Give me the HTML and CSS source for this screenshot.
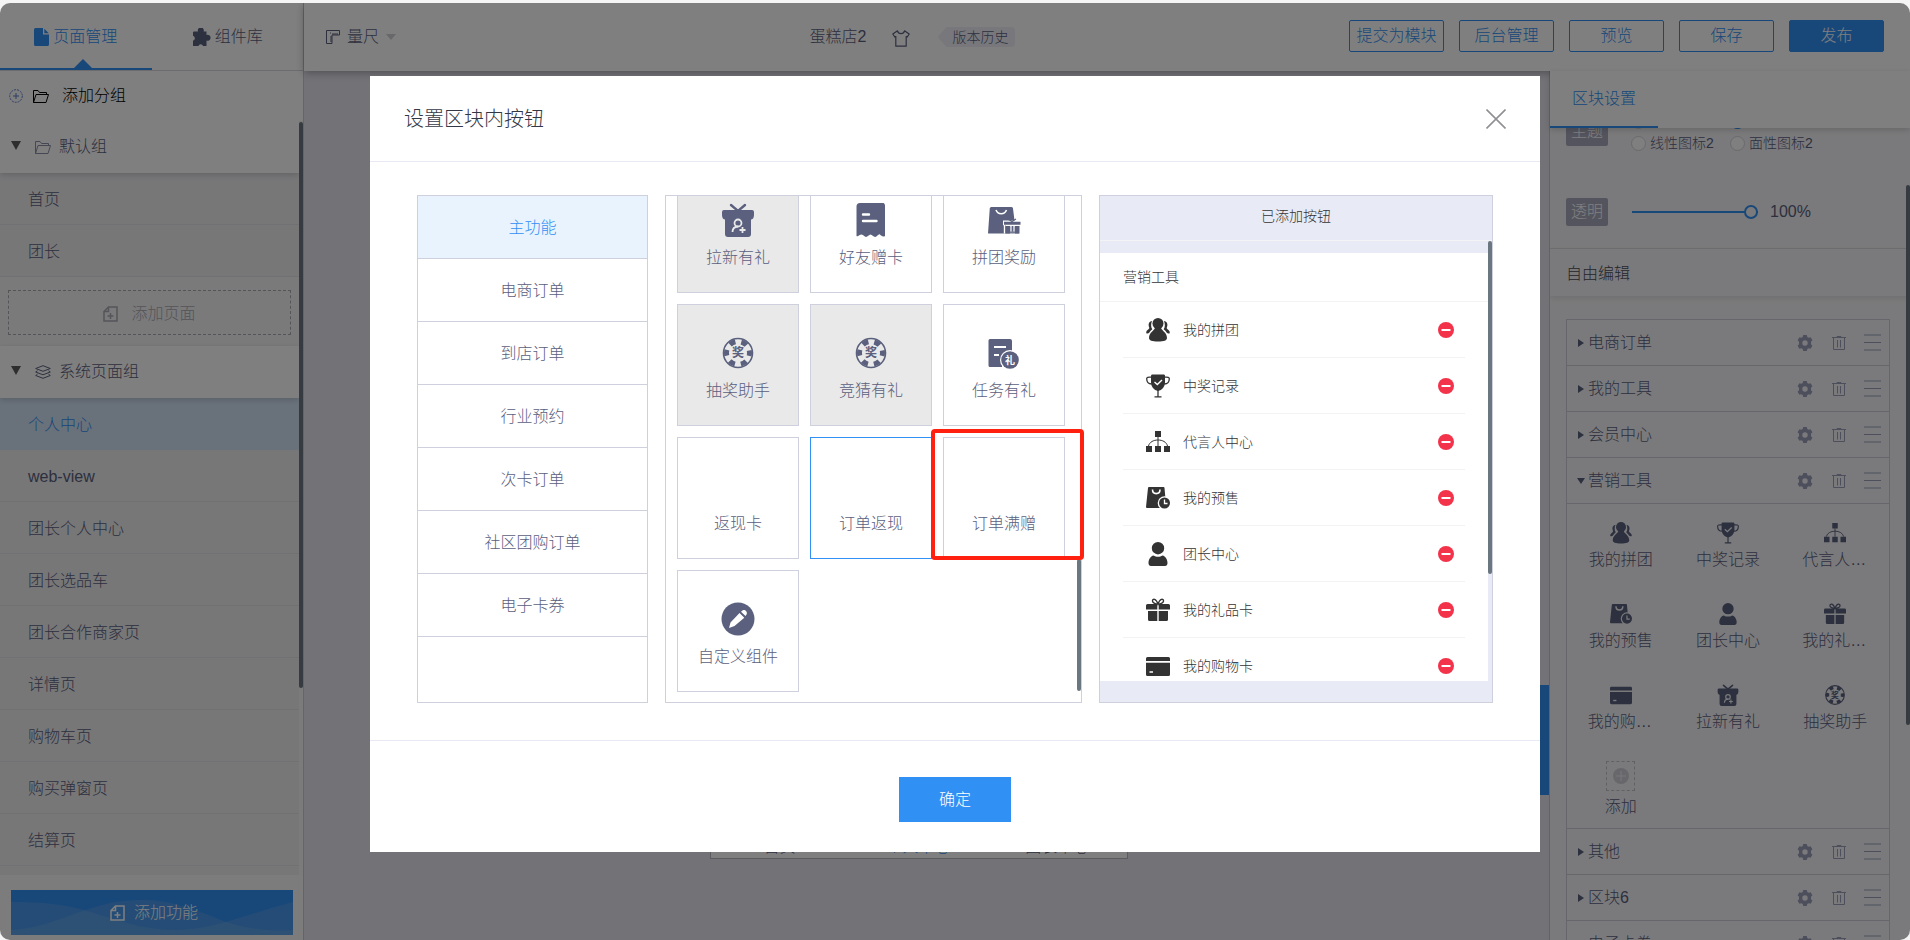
FILE: index.html
```html
<!DOCTYPE html>
<html lang="zh-CN">
<head>
<meta charset="utf-8">
<title>设置区块内按钮</title>
<link rel="stylesheet" href="styles.css">
</head>
<body>
<svg class="sprite" aria-hidden="true">
  <symbol id="i-doc" viewBox="0 0 15 18"><path fill="currentColor" d="M1.5 0H9v6.5h6V16.500a1.500 1.500 0 0 1-1.500 1.500h-12A1.500 1.500 0 0 1 0 16.500v-15A1.500 1.500 0 0 1 1.500 0zM10.300 0.800L14.800 5.300H10.300z"/></symbol>
  <symbol id="i-puzzle" viewBox="0 0 19 18"><path fill="currentColor" d="M6 3.500a3 3 0 1 1 5.600 0H14.500V7a3 3 0 1 1 0 5.600V18H11a2.400 2.400 0 0 0-4.600 0H1V12.800a2.600 2.600 0 0 0 0-5V4.500a1 1 0 0 1 1-1z"/></symbol>
  <symbol id="i-folder" viewBox="0 0 16 14"><path fill="none" stroke="currentColor" stroke-linejoin="round" d="M.5 13.500V1.500h4.500l1.500 2h7v2M.5 13.500l2.500-8h12.500l-2.500 8z"/></symbol>
  <symbol id="i-plus-dash" viewBox="0 0 14 14"><circle cx="7" cy="7" r="6.300" fill="none" stroke="currentColor" stroke-dasharray="2 1"/><path stroke="currentColor" d="M7 4v6M4 7h6"/></symbol>
  <symbol id="i-layers" viewBox="0 0 16 14"><g fill="none" stroke="currentColor" stroke-linejoin="round"><path d="M8 .7L15.300 3.500 8 6.300.7 3.500z"/><path d="M2.500 5.700L.7 7 8 9.800 15.300 7 13.500 5.700M2.500 9.200L.7 10.500 8 13.300l7.300-2.800-1.800-1.300"/></g></symbol>
  <symbol id="i-addpage" viewBox="0 0 15 16"><path fill="none" stroke="currentColor" stroke-width="1.500" d="M1 5.500L5.500 1H14v14H1zM5.500 1v4.500H1M7.500 7v6M4.500 10h6"/></symbol>
  <symbol id="i-ruler" viewBox="0 0 14 14"><path fill="none" stroke="currentColor" d="M.5.5h13V5H6v8.500H.5zM4 3h1M7 3v2M9 3v2M11 3v2M4 7h2M4 9h2M4 11h2"/></symbol>
  <symbol id="i-shirt" viewBox="0 0 18 17"><path fill="none" stroke="currentColor" stroke-width="1.200" stroke-linejoin="round" d="M5.500.8L.8 4l2 3 1-.6v9.800h10.400V6.400l1 .6 2-3L12.500.8a3.600 3.600 0 0 1-7 0z"/></symbol>
  <symbol id="i-close" viewBox="0 0 20 20"><path stroke="currentColor" stroke-width="1.600" d="M.5.5l19 19M19.500.5l-19 19"/></symbol>
  <symbol id="i-gear" viewBox="0 0 16 16"><path fill="currentColor" fill-rule="evenodd" d="M6.200 0h3.600l.5 2 1.300.8 2-.6 1.800 3.100L14 6.700v2.600l1.400 1.400-1.800 3.100-2-.6-1.300.8-.5 2H6.200l-.5-2-1.300-.8-2 .6L.6 10.700 2 9.300V6.700L.6 5.300l1.800-3.100 2 .6L5.700 2zM8 5.300a2.700 2.700 0 1 0 0 5.400 2.700 2.700 0 0 0 0-5.400z"/></symbol>
  <symbol id="i-trash" viewBox="0 0 14 14"><path fill="none" stroke="currentColor" d="M0 1.500h14M5 1V.5h4V1M1.500 1.500v12h11v-12M5.500 4v7.500M8.500 4v7.500"/></symbol>
  <symbol id="i-bars" viewBox="0 0 17 17"><path stroke="currentColor" stroke-width="1.200" d="M0 1h17M0 8.500h17M0 16h17"/></symbol>
  <symbol id="i-users" viewBox="0 0 24 24"><g fill="currentColor"><circle cx="12" cy="5.500" r="5.500"/><path d="M9 9.500h6c0 3 6 4.500 6 10.500 0 2.500-3 3.500-9 3.500S3 22.500 3 20C3 14 9 12.500 9 9.500z"/><path d="M6 3c-3 .5-4 3-3 6 .5 1 .5 1.500-.8 2.600C.8 12.500 0 13.800.3 15.200c1 .5 2 .3 2.700-.2.800-1.500 2-2.600 3.300-3.800C4.800 9 4.800 6 6 3zM18 3c3 .5 4 3 3 6-.5 1-.5 1.500.8 2.600 1.400.9 2.200 2.200 1.900 3.600-1 .5-2 .3-2.700-.2-.8-1.500-2-2.600-3.300-3.800C19.200 9 19.200 6 18 3z"/></g></symbol>
  <symbol id="i-trophy" viewBox="0 0 24 24"><path fill="currentColor" d="M5 2c0-1 .5-1.500 1.500-1.500h11c1 0 1.500.5 1.500 1.500v6c0 5-3 8-7 9-4-1-7-4-7-9z"/><path fill="none" stroke="currentColor" stroke-width="1.300" d="M5.500 3.200C2 2.700.7 3.500.7 4.500c0 3.500 1.300 5.500 5 5.500M18.500 3.200c3.500-.5 4.800.3 4.800 1.300 0 3.500-1.300 5.500-5 5.500M12 16v6.500M8.500 22.800h7"/><path fill="none" class="cut-line" stroke-width="1.400" d="M8.500 8l2.800 2.500L16 6"/></symbol>
  <symbol id="i-org" viewBox="0 0 24 24"><path fill="currentColor" d="M9 1h6v6H9zM0 16h6v6H0zM9 16h6v6H9zM18 16h6v6h-6z"/><path fill="none" stroke="currentColor" stroke-width="1" d="M12 7v9M2.500 16c1-4 5-6 9.500-6s8.500 2 9.500 6"/></symbol>
  <symbol id="i-bagclock" viewBox="0 0 24 24"><path fill="currentColor" d="M3 1h14.500a1 1 0 0 1 1 1l.8 9-4.300 2-2 5 1 4H1a1 1 0 0 1-1-1L2 2a1 1 0 0 1 1-1z"/><path fill="none" class="cut-line" stroke-width="1.600" d="M6.500 3.500c0 5.500 7.500 5.500 7.500 0"/><circle cx="18.500" cy="17" r="6.800" class="cut-fill"/><circle cx="18.500" cy="17" r="5.500" fill="currentColor"/><path fill="none" class="cut-line" stroke-width="1.300" d="M18.500 13.500V17.500h3"/></symbol>
  <symbol id="i-person" viewBox="0 0 24 24"><path fill="currentColor" d="M12 0a6.200 6.200 0 1 1 0 12.400A6.200 6.200 0 0 1 12 0zM7.500 13.500c2.500 1.800 6.500 1.800 9 0 3 .5 5 4 5 7.500 0 2-1 3-2.500 3H5c-1.500 0-2.500-1-2.500-3 0-3.500 2-7 5-7.500z"/></symbol>
  <symbol id="i-gift" viewBox="0 0 24 24"><path fill="currentColor" d="M1.500 6h9.800v5.500H0v-4A1.500 1.500 0 0 1 1.500 6zM12.700 6h9.800A1.500 1.500 0 0 1 24 7.500v4H12.700zM2 13h9.300v10H3.500A1.500 1.500 0 0 1 2 21.500zM12.700 13H22v8.500a1.500 1.500 0 0 1-1.500 1.500h-7.800z"/><path fill="none" stroke="currentColor" stroke-width="1.400" d="M12 6C10 0 6.500.5 6.500 3c0 1.500 2.500 3 5.500 3 3 0 5.500-1.500 5.500-3C17.500.5 14 0 12 6z"/></symbol>
  <symbol id="i-card" viewBox="0 0 24 24"><path fill="currentColor" d="M1.500 3h21A1.500 1.500 0 0 1 24 4.500V7H0V4.500A1.500 1.500 0 0 1 1.500 3zM0 8.800h24v11.700a1.500 1.500 0 0 1-1.500 1.500h-21A1.500 1.500 0 0 1 0 20.500z"/><path class="cut-line" stroke-width="1.500" d="M3.500 18h3.500"/></symbol>
  <symbol id="i-giftuser" viewBox="0 0 34 34"><path fill="currentColor" d="M3 7h28a2 2 0 0 1 2 2v3c0 3-1.500 4.500-3 4.500V31a3 3 0 0 1-3 3H7a3 3 0 0 1-3-3V16.500c-1.500 0-3-1.500-3-4.500V9a2 2 0 0 1 2-2z"/><path fill="none" stroke="currentColor" stroke-width="2.400" stroke-linecap="round" d="M10 2l7 6 7-6"/><g fill="none" class="cut-line" stroke-width="1.800"><circle cx="17" cy="20" r="3.500"/><path d="M11.500 29c0-3.500 2-5.300 5.500-5.500M21.500 24v6M18.500 27h6"/></g></symbol>
  <symbol id="i-coupon" viewBox="0 0 34 34"><path fill="currentColor" d="M6 0h19.500A3.500 3.500 0 0 1 31 3.500V33c-2 1.500-4-.5-5-1.500-1.500-1-3 2.500-4.800 2.500S18 31.500 16.500 31.500 13.500 34 12 34s-2.500-2.500-4.500-2.500S4 34 2.500 33V3.500A3.500 3.500 0 0 1 6 0z"/><path class="cut-line" stroke-width="2.400" stroke-linecap="round" d="M9 11.500h6M9 18h13.500"/></symbol>
  <symbol id="i-baggift" viewBox="0 0 34 34"><path fill="currentColor" d="M4 4h20.500a1.500 1.500 0 0 1 1.500 1.500l1.500 12-9 3v10H1L2.800 5z"/><path fill="none" class="cut-line" stroke-width="1.600" d="M9 7c2 5 8.500 5 10.500 0"/><path class="cut-fill" d="M16 17.500h17.500v4.800H18v8.200h-1.200v-8.200H16z"/><path fill="currentColor" d="M17 18.800h16.500v3H17zM18.500 23h4.500v7.500h-4.500zM28 23h4.500v7.500H28zM24.500 23h2v4.500h-2z"/><path fill="currentColor" d="M18.500 23.200H32V30.500H18.500z" opacity=".85"/><path fill="none" class="cut-line" stroke-width="1.100" d="M24 23v5.500M27 23v5.500"/><path fill="none" stroke="currentColor" stroke-width="1.200" d="M21 16l4 2.500 4-2.500"/></symbol>
  <symbol id="i-chip" viewBox="0 0 34 34"><circle cx="17" cy="17" r="14.500" fill="none" stroke="currentColor" stroke-width="1.600"/><circle cx="17" cy="17" r="11.500" fill="none" stroke="currentColor" stroke-width="5" stroke-dasharray="6 6.040" stroke-dashoffset="3"/><circle cx="17" cy="17" r="7.500" class="cut-fill"/><text x="17" y="21.200" class="glyph" text-anchor="middle">奖</text></symbol>
  <symbol id="i-task" viewBox="0 0 34 34"><path fill="currentColor" d="M3 3h20a2 2 0 0 1 2 2v12l-10 6v8H3a1.500 1.500 0 0 1-1.500-1.500v-25A1.500 1.500 0 0 1 3 3z"/><path class="cut-line" stroke-width="1.800" d="M7 11h12M7 19h5"/><circle cx="23" cy="24" r="10" class="cut-fill"/><circle cx="23" cy="24" r="8.800" fill="currentColor"/><text x="23" y="28" class="glyph glyph-cut" text-anchor="middle">礼</text></symbol>
  <symbol id="i-pencil" viewBox="0 0 34 34"><circle cx="17" cy="17" r="16.500" fill="currentColor"/><path class="cut-fill" d="M18.500 11l4.800 4.800-9.800 8.200-5.500 2 1.500-5.500zM20 9.800l1.800-1.500c2-1 4.700 1.200 4 3.800L24.500 14z"/></symbol>
  <symbol id="i-minus" viewBox="0 0 16 16"><circle cx="8" cy="8" r="8" fill="#f2334a"/><path stroke="#fff" stroke-width="2" d="M3.500 8h9"/></symbol>
  <symbol id="i-pluscircle" viewBox="0 0 16 16"><circle cx="8" cy="8" r="8" fill="#d0cfd8"/><path stroke="#f0f0f4" d="M8 3v10M3 8h10"/></symbol>
</svg>

<div class="app">
  <aside class="side">
    <nav class="side-tabs">
      <button class="side-tab is-active"><svg class="ic-doc"><use href="#i-doc"/></svg>页面管理</button>
      <button class="side-tab"><svg class="ic-puzzle"><use href="#i-puzzle"/></svg>组件库</button>
    </nav>
    <button class="add-group"><svg class="ic-plus"><use href="#i-plus-dash"/></svg><svg class="ic-folder"><use href="#i-folder"/></svg>添加分组</button>
    <div class="side-scroll">
      <button class="group-head"><span class="tri-down"></span><svg class="ic-folder"><use href="#i-folder"/></svg>默认组</button>
      <a class="page-row" href="#">首页</a>
      <a class="page-row" href="#">团长</a>
      <div class="add-page-wrap"><button class="add-page"><svg class="ic-addpage"><use href="#i-addpage"/></svg>添加页面</button></div>
      <button class="group-head group-head-sys"><span class="tri-down"></span><svg class="ic-folder"><use href="#i-layers"/></svg>系统页面组</button>
      <a class="page-row is-current" href="#">个人中心</a>
      <a class="page-row" href="#">web-view</a>
      <a class="page-row" href="#">团长个人中心</a>
      <a class="page-row" href="#">团长选品车</a>
      <a class="page-row" href="#">团长合作商家页</a>
      <a class="page-row" href="#">详情页</a>
      <a class="page-row" href="#">购物车页</a>
      <a class="page-row" href="#">购买弹窗页</a>
      <a class="page-row" href="#">结算页</a>
      <a class="page-row" href="#">&nbsp;</a>
      <span class="bar bar-side"></span>
    </div>
    <div class="side-foot">
      <button class="add-feature">
        <svg class="wave" viewBox="0 0 282 45" preserveAspectRatio="none" aria-hidden="true"><path d="M0 12C40 12 60 16 80 22S130 40 165 40 230 26 282 12V45H0z"/><path d="M0 40C30 38 50 28 75 20S110 10 135 10 190 22 210 30 260 42 282 40V45H0z"/></svg>
        <span class="add-feature-label"><svg class="ic-addpage"><use href="#i-addpage"/></svg>添加功能</span>
      </button>
    </div>
  </aside>

  <div class="main">
    <header class="top">
      <button class="ruler"><svg class="ic-ruler"><use href="#i-ruler"/></svg>量尺<span class="caret"></span></button>
      <div class="store">
        <span>蛋糕店2</span>
        <svg class="ic-shirt"><use href="#i-shirt"/></svg>
        <button class="history">版本历史</button>
      </div>
      <div class="actions">
        <button class="act">提交为模块</button>
        <button class="act">后台管理</button>
        <button class="act">预览</button>
        <button class="act">保存</button>
        <button class="act act-primary">发布</button>
      </div>
    </header>
    <div class="work">
      <div class="stage">
        <div class="phone"><span>首页</span><span class="on">个人中心</span><span>团长中心</span></div>
        <div class="flag"></div>
      </div>
      <aside class="props">
        <div class="props-tabs"><button class="props-tab">区块设置</button></div>
        <div class="props-body">
          <div class="field field-theme">
            <span class="tag">主题</span>
            <div class="radios">
              <label><input type="radio" name="theme">线性图标</label>
              <label><input type="radio" name="theme" checked>面性图标</label>
              <label><input type="radio" name="theme">线性图标2</label>
              <label><input type="radio" name="theme">面性图标2</label>
            </div>
          </div>
          <div class="field field-alpha">
            <label class="tag" for="alpha">透明</label>
            <input class="range" id="alpha" type="range" min="0" max="100" value="100">
            <span>100%</span>
          </div>
          <h3 class="props-title">自由编辑</h3>
          <div class="blocks">
            <div class="block"><span class="tri-r"></span><span class="block-name">电商订单</span><svg class="ic-gear"><use href="#i-gear"/></svg><svg class="ic-trash"><use href="#i-trash"/></svg><svg class="ic-bars"><use href="#i-bars"/></svg></div>
            <div class="block"><span class="tri-r"></span><span class="block-name">我的工具</span><svg class="ic-gear"><use href="#i-gear"/></svg><svg class="ic-trash"><use href="#i-trash"/></svg><svg class="ic-bars"><use href="#i-bars"/></svg></div>
            <div class="block"><span class="tri-r"></span><span class="block-name">会员中心</span><svg class="ic-gear"><use href="#i-gear"/></svg><svg class="ic-trash"><use href="#i-trash"/></svg><svg class="ic-bars"><use href="#i-bars"/></svg></div>
            <div class="block"><span class="tri-r tri-open"></span><span class="block-name">营销工具</span><svg class="ic-gear"><use href="#i-gear"/></svg><svg class="ic-trash"><use href="#i-trash"/></svg><svg class="ic-bars"><use href="#i-bars"/></svg></div>
            <div class="tools">
              <div class="tool"><svg><use href="#i-users"/></svg><span>我的拼团</span></div>
              <div class="tool"><svg><use href="#i-trophy"/></svg><span>中奖记录</span></div>
              <div class="tool"><svg><use href="#i-org"/></svg><span>代言人中心</span></div>
              <div class="tool"><svg><use href="#i-bagclock"/></svg><span>我的预售</span></div>
              <div class="tool"><svg><use href="#i-person"/></svg><span>团长中心</span></div>
              <div class="tool"><svg><use href="#i-gift"/></svg><span>我的礼品卡</span></div>
              <div class="tool"><svg><use href="#i-card"/></svg><span>我的购物卡</span></div>
              <div class="tool"><svg><use href="#i-giftuser"/></svg><span>拉新有礼</span></div>
              <div class="tool"><svg><use href="#i-chip"/></svg><span>抽奖助手</span></div>
              <button class="tool tool-add"><span class="add-box"><svg><use href="#i-pluscircle"/></svg></span><span>添加</span></button>
            </div>
            <div class="block"><span class="tri-r"></span><span class="block-name">其他</span><svg class="ic-gear"><use href="#i-gear"/></svg><svg class="ic-trash"><use href="#i-trash"/></svg><svg class="ic-bars"><use href="#i-bars"/></svg></div>
            <div class="block"><span class="tri-r"></span><span class="block-name">区块6</span><svg class="ic-gear"><use href="#i-gear"/></svg><svg class="ic-trash"><use href="#i-trash"/></svg><svg class="ic-bars"><use href="#i-bars"/></svg></div>
            <div class="block"><span class="tri-r"></span><span class="block-name">电子卡券</span><svg class="ic-gear"><use href="#i-gear"/></svg><svg class="ic-trash"><use href="#i-trash"/></svg><svg class="ic-bars"><use href="#i-bars"/></svg></div>
          </div>
          <span class="bar bar-props"></span>
        </div>
      </aside>
    </div>
  </div>

  <div class="mask">
    <section class="modal" role="dialog" aria-labelledby="modal-title">
      <header class="modal-head">
        <h2 id="modal-title">设置区块内按钮</h2>
        <button class="close" aria-label="关闭"><svg><use href="#i-close"/></svg></button>
      </header>
      <div class="modal-body">
        <nav class="cats">
          <button class="cat is-on">主功能</button>
          <button class="cat">电商订单</button>
          <button class="cat">到店订单</button>
          <button class="cat">行业预约</button>
          <button class="cat">次卡订单</button>
          <button class="cat">社区团购订单</button>
          <button class="cat">电子卡券</button>
        </nav>
        <div class="picker">
          <div class="cards">
            <button class="card is-used"><svg><use href="#i-giftuser"/></svg><span>拉新有礼</span></button>
            <button class="card"><svg><use href="#i-coupon"/></svg><span>好友赠卡</span></button>
            <button class="card"><svg><use href="#i-baggift"/></svg><span>拼团奖励</span></button>
            <button class="card is-used"><svg><use href="#i-chip"/></svg><span>抽奖助手</span></button>
            <button class="card is-used"><svg><use href="#i-chip"/></svg><span>竞猜有礼</span></button>
            <button class="card"><svg><use href="#i-task"/></svg><span>任务有礼</span></button>
            <button class="card"><svg></svg><span>返现卡</span></button>
            <button class="card is-picked"><svg></svg><span>订单返现</span></button>
            <button class="card is-marked"><svg></svg><span>订单满赠</span></button>
            <button class="card"><svg><use href="#i-pencil"/></svg><span>自定义组件</span></button>
          </div>
          <span class="bar bar-picker"></span>
        </div>
        <div class="added">
          <h3 class="added-title">已添加按钮</h3>
          <div class="added-scroll">
            <div class="added-list">
              <h4 class="added-group">营销工具</h4>
              <ul>
                <li><svg class="ic-tool"><use href="#i-users"/></svg><span>我的拼团</span><button aria-label="移除"><svg><use href="#i-minus"/></svg></button></li>
                <li><svg class="ic-tool"><use href="#i-trophy"/></svg><span>中奖记录</span><button aria-label="移除"><svg><use href="#i-minus"/></svg></button></li>
                <li><svg class="ic-tool"><use href="#i-org"/></svg><span>代言人中心</span><button aria-label="移除"><svg><use href="#i-minus"/></svg></button></li>
                <li><svg class="ic-tool"><use href="#i-bagclock"/></svg><span>我的预售</span><button aria-label="移除"><svg><use href="#i-minus"/></svg></button></li>
                <li><svg class="ic-tool"><use href="#i-person"/></svg><span>团长中心</span><button aria-label="移除"><svg><use href="#i-minus"/></svg></button></li>
                <li><svg class="ic-tool"><use href="#i-gift"/></svg><span>我的礼品卡</span><button aria-label="移除"><svg><use href="#i-minus"/></svg></button></li>
                <li><svg class="ic-tool"><use href="#i-card"/></svg><span>我的购物卡</span><button aria-label="移除"><svg><use href="#i-minus"/></svg></button></li>
              </ul>
            </div>
            <span class="bar bar-added"></span>
          </div>
        </div>
      </div>
      <footer class="modal-foot"><button class="ok">确定</button></footer>
    </section>
  </div>
</div>
</body>
</html>
```

FILE: styles.css
```css
* { box-sizing: border-box; }
html, body { height: 100%; }
body {
  margin: 0;
  padding-top: 3px;
  background: #f5f5f5;
  overflow: hidden;
  color: #5a607d;
  font: 300 16px/24px "Liberation Sans", "Noto Sans CJK SC Light", "Noto Sans CJK SC", sans-serif;
}
button { font: inherit; color: inherit; background: none; border: 0; padding: 0; cursor: pointer; }
a { color: inherit; text-decoration: none; }
h2, h3, h4, ul { margin: 0; padding: 0; font-weight: inherit; font-size: inherit; list-style: none; }
svg { display: block; flex: none; }
.sprite { display: none; }
.cut-line { stroke: var(--cut, #fff); }
.cut-fill { fill: var(--cut, #fff); }
.glyph { font: 700 12px "Noto Sans CJK SC", sans-serif; fill: currentColor; }
.glyph-cut { font-size: 10px; fill: var(--cut, #fff); }
.bar { position: absolute; right: 0; width: 4px; border-radius: 2px; background: #6b7780; }

.app { position: relative; display: flex; height: 100%; border-radius: 10px; overflow: hidden; background: #fff; }

/* Left sidebar */
.side { display: flex; flex-direction: column; flex: none; width: 304px; border-right: 1px solid #cbcbd0; background: #fff; }
.side-tabs { display: flex; flex: none; height: 68px; border-bottom: 1px solid #d8d8dc; }
.side-tab { position: relative; flex: 1; display: flex; align-items: center; justify-content: center; gap: 4px; padding-bottom: 0; border-bottom: 2px solid transparent; padding-top: 2px; }
.side-tab.is-active { color: #3190f4; border-color: #3190f4; }
.side-tab.is-active::after { content: ""; position: absolute; left: 55%; bottom: 0; margin-left: -9px; border: 9px solid transparent; border-top: 0; border-bottom-color: #3190f4; }
.ic-doc { width: 15px; height: 18px; }
.ic-puzzle { width: 19px; height: 18px; }
.ic-folder { width: 16px; height: 14px; }
.ic-plus { width: 14px; height: 14px; color: #5a7cc8; margin-right: 10px; }
.ic-addpage { width: 15px; height: 16px; }
.add-group { display: flex; align-items: center; flex: none; height: 50px; padding: 0 9px; color: #000; }
.add-group .ic-folder { margin-right: 13px; }
.side-scroll { position: relative; flex: 1; min-height: 0; overflow: hidden; padding-right: 4px; background: #f6f6f8; }
.group-head { position: relative; display: flex; align-items: center; width: 100%; height: 52px; padding: 0 11px; background: #fff; box-shadow: 0 2px 6px rgba(0, 0, 0, .16); }
.group-head .ic-folder { margin: 0 8px 0 14px; color: #8a8fa8; }
.group-head-sys .ic-folder { color: #5a607d; }
.tri-down { border: 5px solid transparent; border-top: 9px solid #5c5c5c; border-bottom: 0; margin-bottom: 4px; }
.page-row { display: block; height: 52px; padding: 15px 28px 12px; background: #eeeef1; border-bottom: 1px solid #e2e2e6; }
.page-row.is-current { background: #d3e3f6; color: #3190f4; border-color: #d3e3f6; }
.add-page-wrap { height: 69px; padding: 13px 8px 11px; background: #f5f5f7; }
.add-page { display: flex; align-items: center; justify-content: center; gap: 13px; width: 100%; height: 45px; padding-top: 2px; border: 1px dashed #a8a8b2; color: #aaaab4; }
.bar-side { top: 1px; height: 566px; }
.side-foot { flex: none; padding: 15px 10px 5px 11px; background: #f8f8fa; }
.add-feature { position: relative; display: block; width: 100%; height: 45px; background: #3190f4; color: #fff; }
.add-feature-label { position: relative; display: flex; align-items: center; justify-content: center; gap: 9px; padding-left: 4px; }
.wave { position: absolute; left: 0; top: 0; width: 100%; height: 100%; fill: #a4bfdc; opacity: .9; }
.wave path { fill-opacity: .24; }

/* Top bar */
.main { flex: 1; min-width: 0; display: flex; flex-direction: column; }
.top { position: relative; z-index: 1; display: flex; align-items: center; flex: none; height: 68px; padding: 0 26px 0 22px; background: #fff; box-shadow: 0 2px 8px rgba(0, 0, 0, .3); }
.ruler { display: flex; align-items: center; gap: 7px; }
.ic-ruler { width: 14px; height: 14px; }
.caret { border: 5px solid transparent; border-top: 6px solid #d0d0d6; border-bottom: 0; }
.store { flex: 1; display: flex; align-items: center; justify-content: center; padding-left: 80px; }
.ic-shirt { width: 18px; height: 17px; margin: 2px 28px 0 26px; }
.history { height: 20px; padding: 0 7px 0 14px; font-size: 14px; line-height: 20px; background: #f0f1f8; border-radius: 3px; clip-path: polygon(8px 0, 100% 0, 100% 100%, 8px 100%, 0 55%, 0 45%); }
.actions { display: flex; gap: 15px; margin-bottom: 2px; }
.act { width: 95px; height: 32px; border: 1px solid #3190f4; border-radius: 2px; color: #3190f4; white-space: nowrap; }
.act-primary { background: #3190f4; color: #fff; }

/* Canvas */
.work { flex: 1; min-height: 0; display: flex; }
.stage { position: relative; flex: 1; display: flex; justify-content: center; align-items: flex-end; padding: 0 16px 81px 0; background: #e6e5ee; }
.phone { display: grid; grid-template-columns: repeat(3, 1fr); width: 418px; padding: 24px 0 0; background: #fff; border: 1px solid #b8b8c0; text-align: center; line-height: 22px; }
.phone .on { color: #3190f4; }
.flag { position: absolute; right: 0; bottom: 145px; width: 40px; height: 110px; background: #3190f4; }

/* Property panel */
.props { flex: none; display: flex; flex-direction: column; width: 361px; border-left: 1px solid #c6c6cc; background: #f5f5f8; }
.props-tabs { position: relative; z-index: 1; flex: none; height: 57px; background: #fff; box-shadow: 0 2px 6px rgba(0, 0, 0, .16); }
.props-tab { width: 108px; height: 57px; border-bottom: 2px solid #3190f4; color: #3190f4; }
.props-body { position: relative; flex: 1; min-height: 0; overflow: hidden; }
.field { display: flex; align-items: center; padding: 0 16px; }
.field-theme { height: 44px; margin: -18px 0 21px; }
.field-alpha { height: 74px; border-bottom: 1px solid #dedee2; }
.tag { flex: none; width: 42px; height: 28px; line-height: 28px; text-align: center; color: #fff; background: #a9a9bd; border-radius: 2px; }
.radios { display: grid; grid-template-columns: 99px 99px; margin-left: 23px; font-size: 14px; line-height: 22px; }
.radios label { display: flex; align-items: center; gap: 4px; white-space: nowrap; }
.radios input { appearance: none; flex: none; width: 15px; height: 15px; margin: 0; border: 1px solid #d4d4da; border-radius: 50%; background: #fff; }
.radios input:checked { border: 4px solid #3190f4; }
.range { appearance: none; width: 126px; height: 14px; margin: 0 12px 0 24px; background: linear-gradient(#3190f4, #3190f4) center / 100% 2px no-repeat; }
.range::-webkit-slider-thumb { appearance: none; width: 14px; height: 14px; border: 2px solid #3190f4; border-radius: 50%; background: #f5f5f8; }
.props-title { height: 47px; padding: 13px 16px 10px; color: #4a4a55; box-shadow: 0 2px 6px rgba(0, 0, 0, .1); }
.blocks { margin: 23px 20px 0 16px; border: 1px solid #ceced6; }
.block { display: flex; align-items: center; height: 46px; padding: 0 8px 0 11px; border-bottom: 1px solid #ceced6; }
.block-name { flex: 1; margin-left: 4px; }
.tri-r { width: 6px; border: 4px solid transparent; border-left: 6px solid #5a607d; border-right: 0; }
.tri-open { width: 8px; margin: 0 -1px; border: 4px solid transparent; border-top: 6px solid #5a607d; border-bottom: 0; }
.ic-gear { width: 16px; height: 16px; color: #9aa0b8; }
.ic-trash { width: 14px; height: 14px; margin: 0 18px 0 19px; color: #9aa0b8; }
.ic-bars { width: 17px; height: 17px; color: #9aa0b8; }
.tools { --cut: #f5f5f8; display: grid; grid-template-columns: repeat(3, 1fr); grid-auto-rows: 81px; border-bottom: 1px solid #ceced6; }
.tool { display: flex; flex-direction: column; align-items: center; gap: 4px; padding-top: 18px; min-width: 0; }
.tool > svg { width: 22px; height: 22px; }
.tool > span:last-child { width: 66px; overflow: hidden; text-overflow: ellipsis; white-space: nowrap; text-align: center; }
.tool-add { padding-top: 14px; }
.add-box { display: grid; place-items: center; width: 29px; height: 30px; border: 1px dashed #c2c2ca; }
.add-box svg { width: 16px; height: 16px; }
.bar-props { top: 57px; height: 540px; }

/* Dialog */
.mask { position: absolute; inset: 0; z-index: 5; display: flex; justify-content: center; align-items: flex-start; padding-top: 73px; background: rgba(0, 0, 0, .5); }
.modal { width: 1170px; background: #fff; }
.modal-head { display: flex; align-items: center; justify-content: space-between; height: 86px; padding: 0 34px; border-bottom: 1px solid #e8e9f2; color: #333846; font-size: 20px; }
.close { width: 20px; height: 20px; color: #909094; }
.close svg { width: 20px; height: 20px; }
.modal-body { display: grid; grid-template-columns: 231px 417px 394px; grid-template-rows: 508px; column-gap: 17px; padding: 33px 47px 37px; }
.cats, .picker, .added { border: 1px solid #cfd0de; }
.cat { display: block; width: 100%; height: 63px; padding-top: 2px; border-bottom: 1px solid #cfd0de; }
.cat.is-on { background: #e9f3fe; color: #3190f4; }
.picker { position: relative; display: flex; align-items: flex-end; overflow-x: visible; overflow-y: clip; padding: 0 0 10px 11px; }
.cards { display: grid; grid-template-columns: repeat(3, 122px); grid-auto-rows: 122px; gap: 11px; }
.card { position: relative; display: flex; flex-direction: column; align-items: center; justify-content: flex-start; gap: 9px; padding-top: 31px; border: 1px solid #cfd0de; background: #fff; }
.card svg { width: 34px; height: 34px; }
.card.is-used { --cut: #e9e9e9; background: #e9e9e9; }
.card.is-picked { border-color: #3190f4; }
.card.is-marked::after { content: ""; position: absolute; z-index: 2; inset: -9px -20px -2px -13px; border: 4px solid #ff2010; border-radius: 4px; }
.bar-picker { bottom: 11px; height: 132px; }
.added { display: flex; flex-direction: column; background: #e8eaf5; padding-bottom: 21px; color: #333; font-size: 14px; }
.added-title { flex: none; height: 45px; padding: 8px 0; text-align: center; border-bottom: 1px solid #f4f4f4; }
.added-scroll { position: relative; flex: 1; min-height: 0; overflow: hidden; padding: 12px 4px 0 0; }
.added-list { background: #fff; }
.added-group { height: 49px; padding: 12px 23px; border-bottom: 1px solid #f2f2f4; }
.added-list ul { padding: 0 23px; }
.added-list li { display: flex; align-items: center; height: 56px; padding: 0 11px 0 23px; border-bottom: 1px solid #f2f2f4; }
.added-list span { flex: 1; margin-left: 13px; }
.ic-tool { width: 24px; height: 24px; }
.added-list button, .added-list button svg { width: 16px; height: 16px; }
.bar-added { top: 0; height: 333px; }
.modal-foot { display: flex; justify-content: center; padding: 36px 0 30px; border-top: 1px solid #e8e9f2; }
.ok { width: 112px; height: 45px; background: #3190f4; color: #fff; }
```
